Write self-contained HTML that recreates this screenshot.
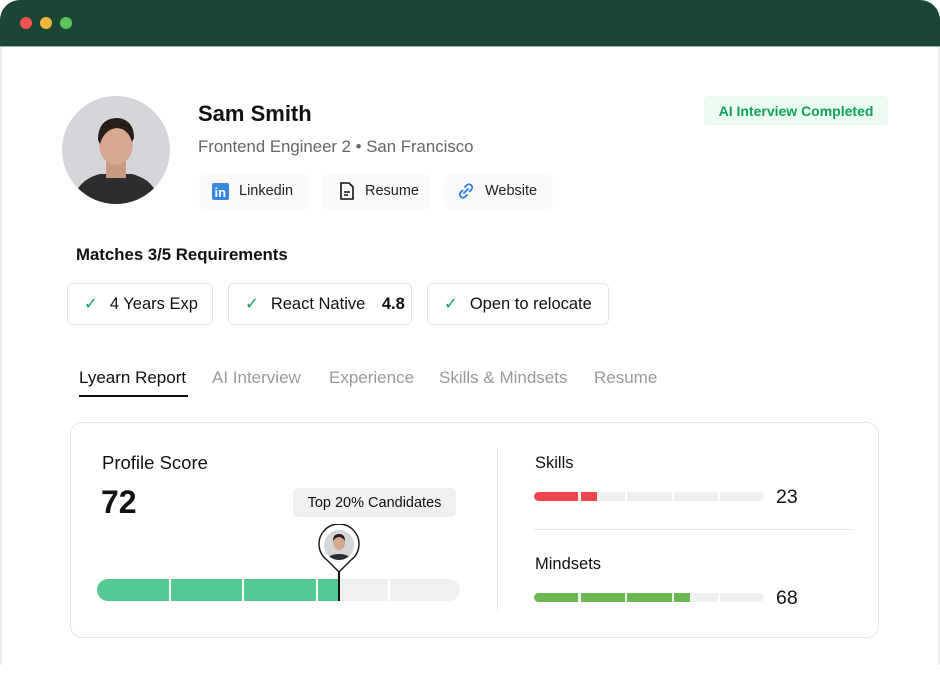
<!DOCTYPE html>
<html><head><meta charset="utf-8"><style>
*{margin:0;padding:0;box-sizing:border-box}
body{width:940px;height:680px;background:#fff;font-family:"Liberation Sans",sans-serif;position:relative;overflow:hidden;color:#111}
.a{position:absolute}
.top{left:0;top:0;width:940px;height:47px;background:#1b4534;border-radius:20px 20px 0 0;border-bottom:1px solid #9fb0a8}
.frame{left:0;top:47px;width:940px;height:618px;border-left:2px solid #eee;border-right:2px solid #eee}
.dot{width:12px;height:12px;border-radius:50%;top:17px}
.btn{top:174px;height:34px;background:#fafafa;border-radius:6px;font-size:14.5px;color:#222;display:flex;align-items:center;padding-left:12px;gap:10px;box-shadow:0 1px 2px rgba(0,0,0,.04)}
.chip{top:283px;height:42px;border:1px solid #e5e5e5;border-radius:6px;font-size:16.5px;display:flex;align-items:center;padding-left:16px;gap:12px;color:#111}
.tab{top:368px;font-size:17px;color:#9a9a9a}
.seg{position:absolute;height:100%;top:0}
</style></head><body>
<div class="a top"></div>
<div class="a dot" style="left:20px;background:#f2534e"></div>
<div class="a dot" style="left:40px;background:#f2b63c"></div>
<div class="a dot" style="left:60px;background:#5cc45a"></div>
<div class="a frame"></div>

<svg class="a" style="left:62px;top:96px" width="108" height="108" viewBox="0 0 108 108">
<defs><clipPath id="c"><circle cx="54" cy="54" r="54"/></clipPath></defs>
<g clip-path="url(#c)"><rect width="108" height="108" fill="#d4d6da"/>
<path d="M10 108 Q14 84 38 78 L70 78 Q94 84 98 108Z" fill="#2b2d2e"/>
<rect x="44" y="62" width="20" height="20" fill="#c89a82"/>
<ellipse cx="54" cy="48" rx="17" ry="21" fill="#d6a88f"/>
<path d="M36 44 Q36 22 56 22 Q72 24 72 42 L70 46 Q66 32 54 32 Q42 34 38 48Z" fill="#2a1e18"/></g></svg>

<div class="a" style="left:198px;top:101px;font-size:22px;font-weight:bold;color:#111">Sam Smith</div>
<div class="a" style="left:198px;top:137px;font-size:16.8px;color:#666">Frontend Engineer 2 • San Francisco</div>

<div class="a btn" style="left:200px;width:108px"><svg width="17" height="17"><rect width="17" height="17" rx="2" fill="#3a88e0"/><text x="2.5" y="14" font-size="13" font-weight="bold" fill="#fff" font-family="Liberation Sans">in</text></svg>Linkedin</div>
<div class="a btn" style="left:323px;width:107px;padding-left:16px"><svg width="16" height="18" viewBox="0 0 16 18" fill="none" stroke="#111" stroke-width="1.6"><path d="M2 1h8l4 4v12H2z"/><path d="M5 10h6M5 13h4"/></svg>Resume</div>
<div class="a btn" style="left:445px;width:107px"><svg width="18" height="18" viewBox="0 0 18 18" fill="none" stroke="#2a7de1" stroke-width="1.8" stroke-linecap="round"><path d="M8 5l2-2a3.2 3.2 0 014.5 4.5l-2 2M10 13l-2 2a3.2 3.2 0 01-4.5-4.5l2-2M7 11l4-4"/></svg>Website</div>

<div class="a" style="left:704px;top:96px;width:184px;height:29px;background:#ebfbf1;border-radius:4px;color:#13a05c;font-size:14px;font-weight:bold;text-align:center;line-height:31px">AI Interview Completed</div>

<div class="a" style="left:76px;top:245px;font-size:16.8px;font-weight:bold">Matches 3/5 Requirements</div>
<div class="a chip" style="left:67px;width:146px"><span style="color:#13a05c">✓</span>4 Years Exp</div>
<div class="a chip" style="left:228px;width:184px"><span style="color:#13a05c">✓</span>React Native&nbsp; <b>4.8</b></div>
<div class="a chip" style="left:427px;width:182px"><span style="color:#13a05c">✓</span>Open to relocate</div>

<div class="a tab" style="left:79px;color:#111">Lyearn Report</div>
<div class="a" style="left:79px;top:395px;width:109px;height:2px;background:#111"></div>
<div class="a tab" style="left:212px">AI Interview</div>
<div class="a tab" style="left:329px">Experience</div>
<div class="a tab" style="left:439px">Skills &amp; Mindsets</div>
<div class="a tab" style="left:594px">Resume</div>

<div class="a" style="left:70px;top:422px;width:809px;height:216px;border:1px solid #e6e6e6;border-radius:12px"></div>
<div class="a" style="left:102px;top:452px;font-size:18.5px">Profile Score</div>
<div class="a" style="left:101px;top:484px;font-size:32px;font-weight:bold">72</div>
<div class="a" style="left:293px;top:488px;width:163px;height:29px;background:#f0f0f0;border-radius:5px;font-size:14.5px;text-align:center;line-height:30px">Top 20% Candidates</div>

<div class="a" style="left:97px;top:579px;width:363px;height:22px;border-radius:11px;background:#f0f0f0;overflow:hidden">
<div class="seg" style="left:0;width:242px;background:#55c992"></div>
<div class="seg" style="left:72px;width:2px;background:#fff"></div>
<div class="seg" style="left:145px;width:2px;background:#fff"></div>
<div class="seg" style="left:219px;width:2px;background:#fff"></div>
<div class="seg" style="left:291px;width:2px;background:#fff"></div>
</div>
<div class="a" style="left:338px;top:560px;width:2px;height:41px;background:#111"></div>
<svg class="a" style="left:317px;top:524px" width="44" height="50" viewBox="0 0 44 50"><path d="M22 48 L10 36 A20 20 0 1 1 34 36Z" fill="#fff" stroke="#111" stroke-width="1.4"/>
<clipPath id="d"><circle cx="22" cy="21" r="15"/></clipPath><g clip-path="url(#d)"><rect width="44" height="44" fill="#d4d6da"/><path d="M6 40 Q10 30 22 30 Q34 30 38 40Z" fill="#2b2d2e"/><ellipse cx="22" cy="19" rx="6" ry="7" fill="#d6a88f"/><path d="M16 17 Q16 10 22 10 Q28 10 28 17 Q25 13 22 13 Q19 13 16 17Z" fill="#2a1e18"/></g></svg>

<div class="a" style="left:497px;top:448px;width:1px;height:162px;background:#e6e6e6"></div>
<div class="a" style="left:535px;top:454px;font-size:16.5px">Skills</div>
<svg class="a" style="left:534px;top:492px" width="231" height="9">
<rect x="0" y="0" width="230" height="9" rx="4.5" fill="#f0f0f0"/>
<rect x="0" y="0" width="44" height="9" rx="4.5" fill="#f0444f"/><rect x="30" width="14" height="9" fill="#f0444f"/>
<rect x="47" width="16" height="9" fill="#f0444f"/>
<rect x="91" width="2" height="9" fill="#fff"/><rect x="138" width="2" height="9" fill="#fff"/><rect x="184" width="2" height="9" fill="#fff"/></svg>
<div class="a" style="left:776px;top:486px;font-size:19.5px">23</div>
<div class="a" style="left:534px;top:529px;width:318px;height:1px;background:#e6e6e6"></div>
<div class="a" style="left:535px;top:555px;font-size:16.5px">Mindsets</div>
<svg class="a" style="left:534px;top:593px" width="231" height="9">
<rect x="0" y="0" width="230" height="9" rx="4.5" fill="#f0f0f0"/>
<rect x="0" y="0" width="44" height="9" rx="4.5" fill="#6ab850"/><rect x="30" width="14" height="9" fill="#6ab850"/>
<rect x="47" width="44" height="9" fill="#6ab850"/><rect x="93" width="45" height="9" fill="#6ab850"/><rect x="140" width="16" height="9" fill="#6ab850"/>
<rect x="184" width="2" height="9" fill="#fff"/></svg>
<div class="a" style="left:776px;top:587px;font-size:19.5px">68</div>
</body></html>
